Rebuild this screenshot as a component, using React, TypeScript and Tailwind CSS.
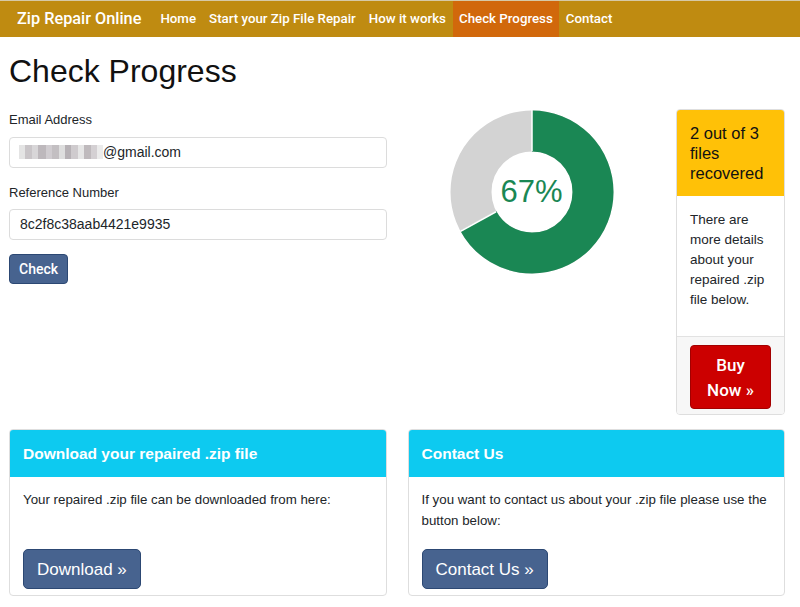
import React from 'react';

const font = { fontFamily: '"Liberation Sans", Arial, sans-serif' };
const navFont = { fontFamily: 'Roboto, "Liberation Sans", Arial, sans-serif' };

function Donut({ percent }: { percent: number }) {
  const cx = 82;
  const cy = 82;
  const r = 61;
  const c = 2 * Math.PI * r;
  const green = (c * percent) / 100;
  const a = (2 * Math.PI * percent) / 100;
  return (
    <div className="relative w-[164px] h-[164px]">
      <svg width="164" height="164" viewBox="0 0 164 164">
        <circle cx={cx} cy={cy} r={r} fill="none" stroke="#d3d3d3" strokeWidth="41" />
        <circle
          cx={cx}
          cy={cy}
          r={r}
          fill="none"
          stroke="#1a8754"
          strokeWidth="41"
          strokeDasharray={`${green} ${c}`}
          transform={`rotate(-90 ${cx} ${cy})`}
        />
        {/* segment separators */}
        <line x1={cx} y1={cy - 41} x2={cx} y2={0} stroke="#fff" strokeWidth="1.5" />
        <line
          x1={cx + 41 * Math.sin(a)}
          y1={cy - 41 * Math.cos(a)}
          x2={cx + 82 * Math.sin(a)}
          y2={cy - 82 * Math.cos(a)}
          stroke="#fff"
          strokeWidth="1.5"
        />
      </svg>
      <div className="absolute inset-0 flex items-center justify-center text-[31px] text-[#1a8754]">
        {percent}%
      </div>
    </div>
  );
}

export default function App() {
  const navItems = ['Home', 'Start your Zip File Repair', 'How it works', 'Check Progress', 'Contact'];
  return (
    <div className="w-[800px] h-[607px] overflow-hidden bg-white text-[#212529]" style={font}>
      {/* Navbar */}
      <nav className="h-[37px] bg-[#bf8b11] border-t border-[#d6c9a6] flex items-stretch pl-[17px]" style={navFont}>
        <span className="text-white text-[16.3px] font-medium flex items-center mr-[13px]">Zip Repair Online</span>
        <div className="flex items-stretch gap-px">
          {navItems.map((item) => (
            <span
              key={item}
              className={
                item === 'Check Progress'
                  ? 'flex items-center px-[6px] text-[13.3px] font-medium text-white bg-[#d1680b]'
                  : 'flex items-center px-[6px] text-[13.3px] font-medium text-white'
              }
            >
              {item}
            </span>
          ))}
        </div>
      </nav>

      <div className="pl-[9px] w-[785px]">
        <h1 className="text-[32px] leading-none mt-[18px] mb-[20px] text-[#111]">Check Progress</h1>

        <div className="flex">
          {/* Form */}
          <div className="w-[378px] shrink-0">
            <label className="block text-[13px] mb-[7px] mt-[3px]">Email Address</label>
            <div className="h-[31px] border border-[#dcdcdc] rounded-[4px] flex items-center pl-[9px] text-[14px]">
              <span className="flex h-[14px]">
                <span className="w-[6px] bg-[#e4e4e4]" />
                <span className="w-[7px] bg-[#c9c5c8]" />
                <span className="w-[6px] bg-[#d8d6d8]" />
                <span className="w-[8px] bg-[#bdb8bc]" />
                <span className="w-[6px] bg-[#d0ccd0]" />
                <span className="w-[7px] bg-[#c3bfc2]" />
                <span className="w-[6px] bg-[#dedede]" />
                <span className="w-[6px] bg-[#b7b2b6]" />
                <span className="w-[7px] bg-[#cfcbce]" />
                <span className="w-[6px] bg-[#e6e6e6]" />
                <span className="w-[7px] bg-[#bfbabd]" />
                <span className="w-[6px] bg-[#d4d0d3]" />
                <span className="w-[6px] bg-[#ebebeb]" />
              </span>
              <span>@gmail.com</span>
            </div>
            <label className="block text-[13px] mt-[15px] mb-[7px]">Reference Number</label>
            <div className="h-[31px] border border-[#dcdcdc] rounded-[4px] flex items-center pl-[10px] text-[14px]">
              8c2f8c38aab4421e9935
            </div>
            <button className="mt-[14px] h-[30px] px-[9px] bg-[#47638f] border border-[#2c4873] rounded-[4px] text-white text-[14px] font-medium" style={navFont}>
              Check
            </button>
          </div>

          {/* Chart */}
          <div className="flex-1 flex justify-center pt-[3px]">
            <Donut percent={67} />
          </div>

          {/* Status card */}
          <div className="w-[109px] shrink-0 mt-[2px] border border-[#dedede] rounded-[4px] flex flex-col overflow-hidden">
            <div className="bg-[#ffc107] h-[86px] px-[13px] pt-[13px] text-[16.5px] leading-[20px] text-[#111]">
              2 out of 3 files recovered
            </div>
            <div className="h-[140px] px-[13px] pt-[14px] text-[13.5px] leading-[20px]">
              There are more details about your repaired .zip file below.
            </div>
            <div className="bg-[#f7f7f7] border-t border-[#e2e2e2] h-[78px] px-[13px] pt-[8px]">
              <button className="w-[81px] h-[64px] pt-[2px] bg-[#cc0000] border border-[#a30000] rounded-[4px] text-white text-[17px] leading-[25px] font-medium" style={navFont}>
                Buy
                <br />
                Now »
              </button>
            </div>
          </div>
        </div>

        {/* Bottom cards */}
        <div className="flex gap-[21px] mt-[14px]">
          <div className="w-[378px] h-[167px] border border-[#dedede] rounded-[4px] overflow-hidden flex flex-col">
            <div className="bg-[#0dcaf0] h-[47px] px-[13px] flex items-center text-white text-[15.5px] font-bold">
              Download your repaired .zip file
            </div>
            <div className="flex-1 px-[13px] pt-[12px] text-[13.3px] leading-[21px]">
              <p className="h-[60px]">Your repaired .zip file can be downloaded from here:</p>
              <button className="h-[40px] px-[13px] bg-[#47638f] border border-[#2c4873] rounded-[5px] text-white text-[17px]">
                Download »
              </button>
            </div>
          </div>
          <div className="w-[378px] h-[167px] border border-[#dedede] rounded-[4px] overflow-hidden flex flex-col">
            <div className="bg-[#0dcaf0] h-[47px] px-[13px] flex items-center text-white text-[15.5px] font-bold">
              Contact Us
            </div>
            <div className="flex-1 px-[13px] pt-[12px] text-[13.3px] leading-[21px]">
              <p className="h-[60px]">If you want to contact us about your .zip file please use the button below:</p>
              <button className="h-[40px] px-[13px] bg-[#47638f] border border-[#2c4873] rounded-[5px] text-white text-[17px]">
                Contact Us »
              </button>
            </div>
          </div>
        </div>
      </div>
    </div>
  );
}
